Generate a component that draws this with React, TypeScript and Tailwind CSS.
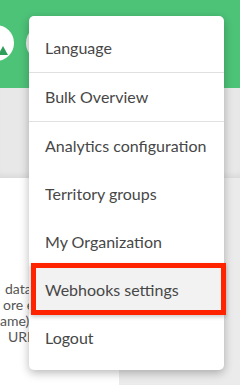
const items = [
  { label: 'Language', divider: true },
  { label: 'Bulk Overview', divider: true },
  { label: 'Analytics configuration' },
  { label: 'Territory groups' },
  { label: 'My Organization' },
  { label: 'Webhooks settings', active: true },
  { label: 'Logout' },
];

const hiddenLines = [
  { text: 'data', indent: 'pl-[5px]' },
  { text: 'ore e', indent: 'pl-[3px]' },
  { text: 'ame)', indent: 'pl-0' },
  { text: 'URL', indent: 'pl-[8px]' },
];

export default function App() {
  return (
    <div className="relative flex h-[385px] w-[240px] flex-col overflow-hidden bg-[#ebebeb] font-['Lato',sans-serif]">
      <header className="flex h-[88px] shrink-0 items-center gap-[12px] bg-[#4dc378] pb-[2px] pl-0 -ml-[22px]">
        <div className="flex h-[36px] w-[36px] items-end justify-end overflow-hidden rounded-full bg-white p-[6px]">
          <div className="h-0 w-0 border-x-[5px] border-b-[9px] border-x-transparent border-b-[#2f9e5a]" />
        </div>
        <div className="h-[36px] w-[36px] rounded-full bg-[#efefef]" />
      </header>
      <div className="h-[90px] shrink-0 bg-[#e8e8e8] shadow-[inset_0_-6px_6px_-4px_rgba(0,0,0,0.08)]" />
      <div className="flex flex-1">
        <div className="w-[119px] bg-white pt-[103px] text-[14px] leading-[16px] text-[#555]">
          {hiddenLines.map((line) => (
            <div key={line.text} className={`whitespace-nowrap ${line.indent}`}>
              {line.text}
            </div>
          ))}
        </div>
        <div className="flex-1 bg-[#ebebeb]" />
      </div>

      <div className="absolute left-[29px] top-[16px] w-[195px] rounded-[5px] bg-white py-[8px] shadow-[0_3px_10px_rgba(0,0,0,0.28)]">
        {items.map((item) => (
          <div
            key={item.label}
            className={`relative flex h-[48px] items-center px-[16px] text-[16px] text-[#474747] ${
              item.divider ? 'box-content border-b border-[#e0e0e0]' : ''
            } ${item.active ? 'bg-[#f2f2f2]' : ''}`}
          >
            {item.label}
            {item.active && (
              <div className="absolute -bottom-[1px] -left-[-2px] -right-[2px] -top-[3px] border-[5px] border-[#ff2300] shadow-[0_2px_4px_rgba(0,0,0,0.2)]" />
            )}
          </div>
        ))}
      </div>
    </div>
  );
}
